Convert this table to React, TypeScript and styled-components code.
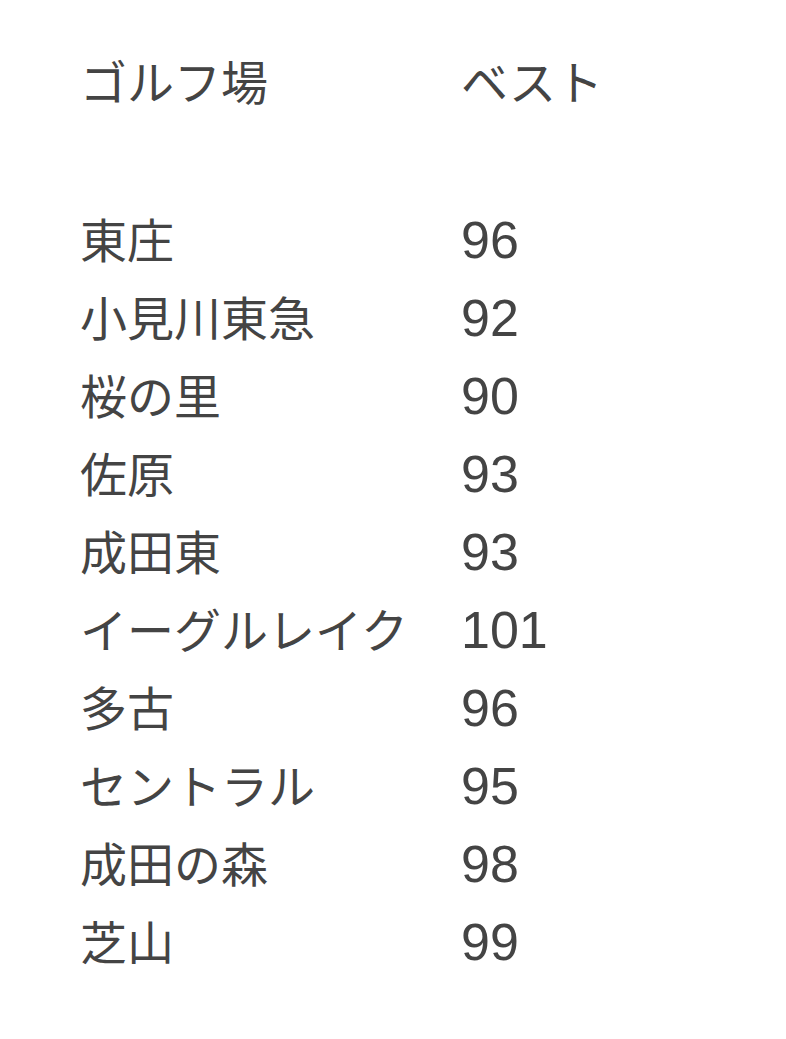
import { Fragment } from "react";
import styled, { createGlobalStyle } from "styled-components";

const GlobalStyle = createGlobalStyle`
  html, body {
    margin: 0;
    padding: 0;
    background: #ffffff;
  }
`;

const Page = styled.div`
  padding: 45px 0 0 80px;
  font-family: "Liberation Sans", "Noto Sans CJK JP", sans-serif;
  color: #444444;
`;

const Table = styled.div`
  display: grid;
  grid-template-columns: 381px auto;
  grid-auto-rows: 78px;
  align-items: baseline;
  font-size: 47px;
  line-height: 78px;
`;

const Cell = styled.div`
  white-space: nowrap;
`;

const Score = styled.div`
  font-size: 52px;
  white-space: nowrap;
`;

const Spacer = styled.div`
  grid-column: 1 / -1;
`;

const courses: [string, number][] = [
  ["東庄", 96],
  ["小見川東急", 92],
  ["桜の里", 90],
  ["佐原", 93],
  ["成田東", 93],
  ["イーグルレイク", 101],
  ["多古", 96],
  ["セントラル", 95],
  ["成田の森", 98],
  ["芝山", 99],
];

export default function App() {
  return (
    <>
      <GlobalStyle />
      <Page>
        <Table>
          <Cell>ゴルフ場</Cell>
          <Cell>ベスト</Cell>
          <Spacer />
          {courses.map(([name, best]) => (
            <Fragment key={name}>
              <Cell>{name}</Cell>
              <Score>{best}</Score>
            </Fragment>
          ))}
        </Table>
      </Page>
    </>
  );
}
